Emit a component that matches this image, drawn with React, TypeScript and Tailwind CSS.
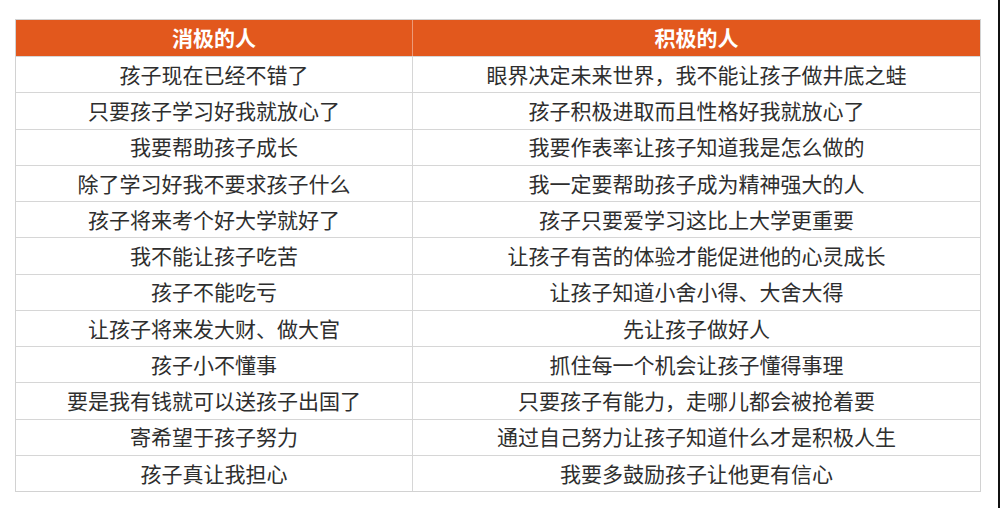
import React from "react";

const rows: [string, string][] = [
  ["孩子现在已经不错了", "眼界决定未来世界，我不能让孩子做井底之蛙"],
  ["只要孩子学习好我就放心了", "孩子积极进取而且性格好我就放心了"],
  ["我要帮助孩子成长", "我要作表率让孩子知道我是怎么做的"],
  ["除了学习好我不要求孩子什么", "我一定要帮助孩子成为精神强大的人"],
  ["孩子将来考个好大学就好了", "孩子只要爱学习这比上大学更重要"],
  ["我不能让孩子吃苦", "让孩子有苦的体验才能促进他的心灵成长"],
  ["孩子不能吃亏", "让孩子知道小舍小得、大舍大得"],
  ["让孩子将来发大财、做大官", "先让孩子做好人"],
  ["孩子小不懂事", "抓住每一个机会让孩子懂得事理"],
  ["要是我有钱就可以送孩子出国了", "只要孩子有能力，走哪儿都会被抢着要"],
  ["寄希望于孩子努力", "通过自己努力让孩子知道什么才是积极人生"],
  ["孩子真让我担心", "我要多鼓励孩子让他更有信心"],
];

export default function App() {
  return (
    <div
      className="w-[1000px] h-[508px] bg-white flex overflow-hidden"
      style={{ fontFamily: '"Noto Sans CJK SC", "Noto Sans", sans-serif' }}
    >
      <div className="flex-1 pt-[19px] pl-[15px]">
        <div className="w-[966px] border border-[#d2d2d2] text-[#2e2e2e]">
          <div className="flex h-[36px] bg-[#e2581d] text-white font-bold text-[21px]">
            <div className="w-[397px] flex items-center justify-center border-r border-[#ec9a78]">
              消极的人
            </div>
            <div className="flex-1 flex items-center justify-center">积极的人</div>
          </div>
          {rows.map(([a, b], i) => (
            <div
              key={i}
              className="flex h-[36.25px] border-t border-[#d6d6d6] text-[21px]"
            >
              <div className="w-[397px] flex items-center justify-center border-r border-[#d6d6d6]">
                {a}
              </div>
              <div className="flex-1 flex items-center justify-center">{b}</div>
            </div>
          ))}
        </div>
      </div>
      <div className="w-[2px] h-full bg-[#111111]" />
    </div>
  );
}
